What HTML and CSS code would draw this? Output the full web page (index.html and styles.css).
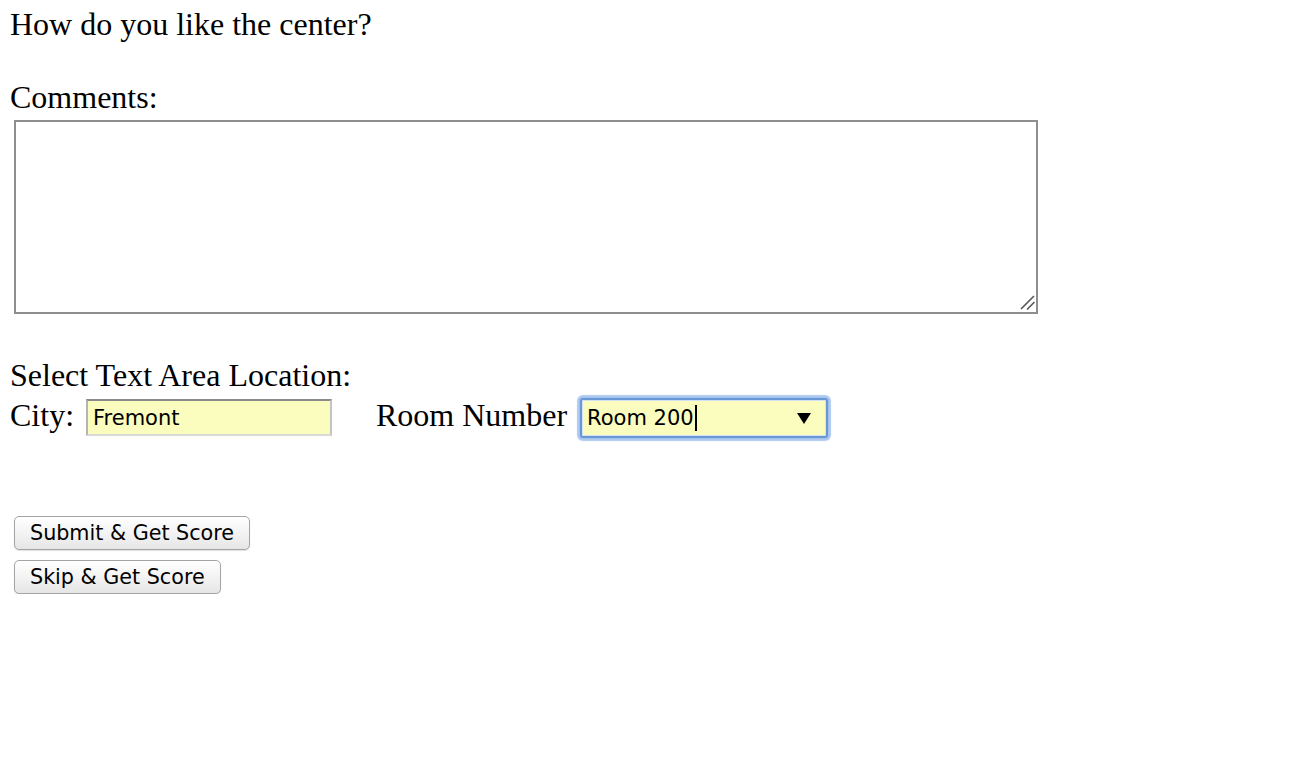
FILE: index.html
```html
<!DOCTYPE html>
<html>
<head>
<meta charset="utf-8">
<link rel="stylesheet" href="styles.css">
</head>
<body>
<div class="page">
  <div class="line question">How do you like the center?</div>
  <div class="line comments-label">Comments:</div>
  <div class="textarea-wrap">
    <textarea class="comments"></textarea>
    <svg class="grip" width="15" height="15" viewBox="0 0 15 15"><path d="M1.5 13.5 L13.5 1.5 M7.5 14 L14 7.5" stroke="#5a5a5a" stroke-width="1.7" stroke-linecap="round"/></svg>
  </div>
  <div class="line location-label">Select Text Area Location:</div>
  <div class="loc-row">
    <span class="line">City:</span>
    <div class="city-input">Fremont</div>
    <span class="line room-label">Room Number</span>
    <div class="room-select"><span class="room-text">Room 200</span><span class="caret"></span><span class="arrow"></span></div>
  </div>
  <div class="buttons">
    <div class="btn">Submit &amp; Get Score</div>
    <div class="btn">Skip &amp; Get Score</div>
  </div>
</div>
</body>
</html>
```

FILE: styles.css
```css
html, body {
  margin: 0;
  padding: 0;
  background: #fff;
}
.page {
  padding: 6px 0 0 10px;
  font-family: "Liberation Serif", "Times New Roman", serif;
  font-size: 32px;
  color: #000;
}
.line {
  line-height: 37px;
}
.comments-label {
  margin-top: 36px;
}
.textarea-wrap {
  position: relative;
  margin: 4px 0 0 4px;
  width: 1024px;
  height: 194px;
}
.comments {
  display: block;
  box-sizing: border-box;
  width: 1024px;
  height: 194px;
  margin: 0;
  border: 2px solid #8e8e8e;
  background: #fff;
  resize: none;
  outline: none;
}
.grip {
  position: absolute;
  left: 1006px;
  top: 175px;
}
.location-label {
  margin-top: 43px;
}
.loc-row {
  display: flex;
  align-items: flex-start;
  margin-top: 3px;
}
.city-input {
  box-sizing: border-box;
  margin: 2px 0 0 12px;
  width: 246px;
  height: 37px;
  border: 2px solid #d9d9d9;
  border-top-color: #8a8a8a;
  border-left-color: #b4b4b4;
  border-right-color: #c4c4c4;
  background: #fafdbd;
  font-family: "DejaVu Sans", "Lucida Grande", sans-serif;
  font-size: 21px;
  line-height: 34px;
  padding-left: 5px;
}
.room-label {
  margin-left: 44px;
}
.room-select {
  box-sizing: border-box;
  margin: 1px 0 0 13px;
  width: 248px;
  height: 40px;
  border: 2px solid #6a97d6;
  border-radius: 3px;
  box-shadow: 0 0 0 1px #a3c2ec, 0 0 1px 3px rgba(130, 172, 232, 0.65), inset 0 0 0 1px #d4e2f6;
  background: #fafdbd;
  font-family: "DejaVu Sans", "Lucida Grande", sans-serif;
  font-size: 21px;
  display: flex;
  align-items: center;
  padding-left: 5px;
}
.caret {
  display: inline-block;
  width: 2px;
  height: 26px;
  background: #000;
  margin-left: 1px;
}
.arrow {
  margin-left: auto;
  margin-right: 15px;
  width: 0;
  height: 0;
  border-left: 7px solid transparent;
  border-right: 7px solid transparent;
  border-top: 11px solid #000;
}
.buttons {
  margin: 78px 0 0 4px;
  display: flex;
  flex-direction: column;
  align-items: flex-start;
  gap: 10px;
}
.btn {
  box-sizing: border-box;
  height: 34px;
  padding: 0 15px;
  border: 1px solid #a4a4a4;
  border-radius: 5px;
  background: linear-gradient(#ffffff, #f3f3f3 50%, #e6e6e6);
  box-shadow: 0 1px 1px rgba(0,0,0,0.12);
  font-family: "DejaVu Sans", "Lucida Grande", sans-serif;
  font-size: 20.7px;
  line-height: 32px;
  color: #000;
}
```
